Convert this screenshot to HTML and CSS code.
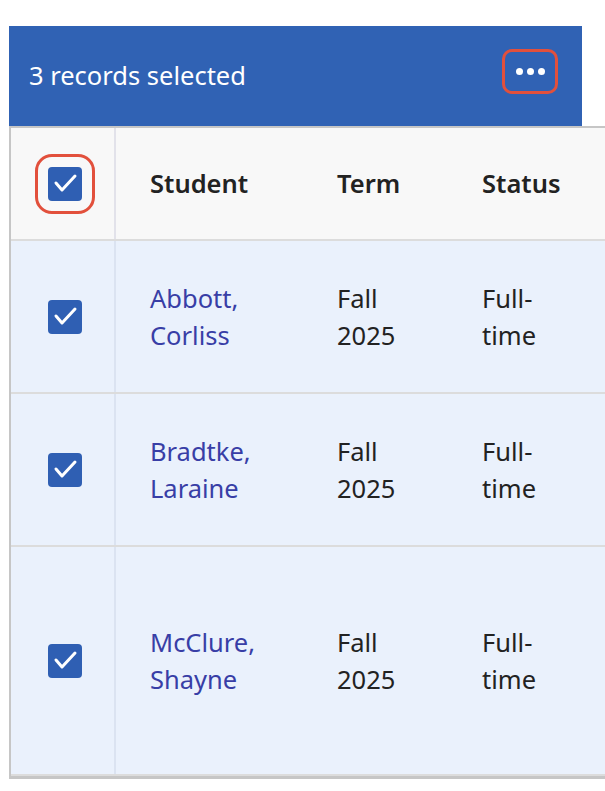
FILE: index.html
```html
<!DOCTYPE html>
<html lang="en">
<head>
<meta charset="utf-8">
<title>Records</title>
<link rel="stylesheet" href="styles.css">
</head>
<body>
<div class="page">
  <div class="bulk-bar">
    <span class="bulk-count">3 records selected</span>
    <button class="more-btn" aria-label="More actions">
      <span class="dot"></span><span class="dot"></span><span class="dot"></span>
    </button>
  </div>
  <div class="table">
    <div class="row head">
      <div class="cell cb-cell">
        <span class="checkbox focused">
          <svg viewBox="0 0 34 34" width="34" height="34"><polyline points="8,16 14,23 27,9" fill="none" stroke="#fff" stroke-width="3" stroke-linecap="round" stroke-linejoin="round"/></svg>
        </span>
      </div>
      <div class="cell">Student</div>
      <div class="cell">Term</div>
      <div class="cell">Status</div>
      <div class="cell"></div>
    </div>
    <div class="row sel">
      <div class="cell cb-cell">
        <span class="checkbox">
          <svg viewBox="0 0 34 34" width="34" height="34"><polyline points="8,16 14,23 27,9" fill="none" stroke="#fff" stroke-width="3" stroke-linecap="round" stroke-linejoin="round"/></svg>
        </span>
      </div>
      <div class="cell"><a class="name" href="#">Abbott,<br>Corliss</a></div>
      <div class="cell">Fall<br>2025</div>
      <div class="cell">Full-<br>time</div>
      <div class="cell"></div>
    </div>
    <div class="row sel">
      <div class="cell cb-cell">
        <span class="checkbox">
          <svg viewBox="0 0 34 34" width="34" height="34"><polyline points="8,16 14,23 27,9" fill="none" stroke="#fff" stroke-width="3" stroke-linecap="round" stroke-linejoin="round"/></svg>
        </span>
      </div>
      <div class="cell"><a class="name" href="#">Bradtke,<br>Laraine</a></div>
      <div class="cell">Fall<br>2025</div>
      <div class="cell">Full-<br>time</div>
      <div class="cell"></div>
    </div>
    <div class="row sel tall">
      <div class="cell cb-cell">
        <span class="checkbox">
          <svg viewBox="0 0 34 34" width="34" height="34"><polyline points="8,16 14,23 27,9" fill="none" stroke="#fff" stroke-width="3" stroke-linecap="round" stroke-linejoin="round"/></svg>
        </span>
      </div>
      <div class="cell"><a class="name" href="#">McClure,<br>Shayne</a></div>
      <div class="cell">Fall<br>2025</div>
      <div class="cell">Full-<br>time</div>
      <div class="cell"></div>
    </div>
  </div>
</div>
</body>
</html>
```

FILE: styles.css
```css
html, body {
  margin: 0;
  padding: 0;
  background: #ffffff;
  overflow: hidden;
}

body {
  font-family: "Noto Sans", "Open Sans", sans-serif;
  color: #222222;
}

.page {
  padding: 26px 0 0 9px;
  width: 596px;
  overflow: hidden;
}

.bulk-bar {
  width: 573px;
  height: 100px;
  box-sizing: border-box;
  background: #3062b4;
  display: flex;
  align-items: center;
  justify-content: space-between;
  padding: 0 24px 0 20px;
  color: #ffffff;
}

.bulk-count {
  font-size: 25.5px;
  line-height: 30px;
  margin-top: -2px;
}

.more-btn {
  width: 56px;
  height: 45px;
  box-sizing: border-box;
  border: 3px solid #e2503c;
  border-radius: 10px;
  background: transparent;
  display: flex;
  align-items: center;
  justify-content: center;
  gap: 4px;
  padding: 0;
  margin-top: -10px;
}

.dot {
  width: 7px;
  height: 7px;
  border-radius: 50%;
  background: #ffffff;
}

.table {
  width: 820px;
  border-left: 2px solid #c6c6c6;
  border-top: 2px solid #c6c6c6;
  border-bottom: 3px solid #c6c6c6;
}

.row {
  display: grid;
  grid-template-columns: 105px 187px 145px 145px 238px;
  border-bottom: 2px solid #dcdcdc;
  font-size: 25.5px;
  line-height: 37px;
}

.head {
  height: 113px;
  box-sizing: border-box;
  background: #f8f8f8;
  font-weight: 600;
}

.sel {
  background: #eaf1fc;
  height: 153px;
  box-sizing: border-box;
}

.sel.tall {
  height: 229px;
}

.cell {
  display: flex;
  flex-direction: column;
  justify-content: center;
  padding-left: 34px;
}

.cb-cell {
  padding-left: 4px;
  align-items: center;
  border-right: 2px solid #e2e2ea;
}

.sel .cb-cell {
  border-right-color: #dbe3f1;
}

.checkbox {
  width: 34px;
  height: 34px;
  border-radius: 4px;
  background: #2f5fb3;
  display: block;
}

.checkbox svg {
  display: block;
}

.checkbox.focused {
  outline: 3px solid #e2503c;
  outline-offset: 10px;
  border-radius: 4px;
}

.name {
  color: #383ea6;
  text-decoration: none;
}
```
